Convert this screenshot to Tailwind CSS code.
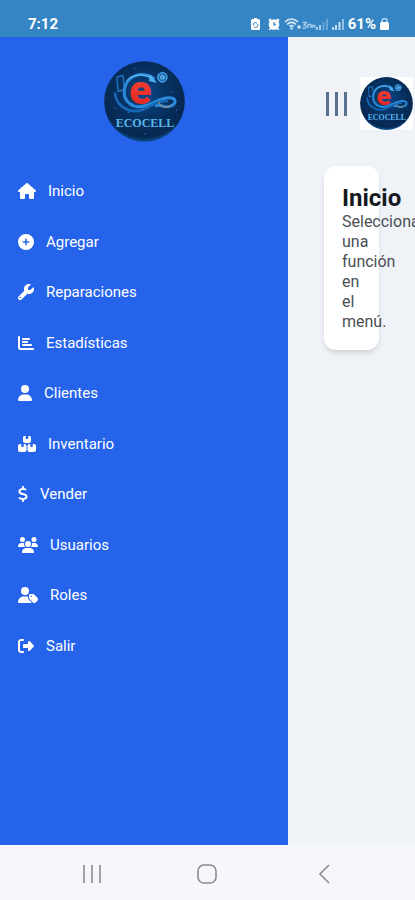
<!DOCTYPE html>
<html lang="es">
<head>
  <meta charset="UTF-8" />
  <meta name="viewport" content="width=device-width, initial-scale=1.0" />
  <title>Ecocell</title>
  <script src="https://cdn.jsdelivr.net/npm/@tailwindcss/browser@4"></script>
</head>
<body class="min-h-screen flex flex-col overflow-x-hidden bg-[#eff3f8] font-['Roboto',sans-serif]">
  <!-- Shared logo -->
  <svg class="absolute w-0 h-0" aria-hidden="true">
    <defs>
      <radialGradient id="logo-bg" cx="50%" cy="42%" r="58%">
        <stop offset="0" stop-color="#0a4a8c" />
        <stop offset="0.55" stop-color="#07305f" />
        <stop offset="0.9" stop-color="#062850" />
        <stop offset="1" stop-color="#0b4f8f" />
      </radialGradient>
      <linearGradient id="logo-e" x1="0" y1="0" x2="0" y2="1">
        <stop offset="0" stop-color="#ff4a38" />
        <stop offset="1" stop-color="#d92020" />
      </linearGradient>
    </defs>
    <symbol id="logo" viewBox="27 18 243 243">
      <circle cx="148.500" cy="139.500" r="121" fill="url(#logo-bg)" />
      <g fill="#2c7fc4">
        <circle cx="120" cy="40" r="2" />
        <circle cx="60" cy="160" r="2" />
        <circle cx="100" cy="172" r="2" />
        <circle cx="232" cy="110" r="2" />
        <circle cx="245" cy="165" r="2" />
        <circle cx="150" cy="236" r="2" />
      </g>
      <g fill="none" stroke-linecap="round" stroke-linejoin="round">
        <path d="M66 66l18-4 5 42-20 5z" stroke="#1f6db2" stroke-width="5" />
        <path d="M176 70C140 46 92 62 88 106c-4 34 26 54 56 48 30-6 48-26 78-26 24 0 24 20 2 26-18 6-28-8-40-2" stroke="#2a8bdc" stroke-width="9" />
        <path d="M60 116c4 40 50 66 92 44 22-12 40-22 64-22" stroke="#1769b5" stroke-width="8" />
        <path d="M96 76c16-18 50-24 76-4" stroke="#6cc4f5" stroke-width="3" />
        <path d="M192 142c6 18 24 20 36 8" stroke="#b98a52" stroke-width="3" />
        <circle cx="202" cy="67" r="14" fill="#1d6fb8" stroke="#4aa3e4" stroke-width="4" />
        <circle cx="202" cy="67" r="5" stroke="#8fd2fa" stroke-width="3" />
      </g>
      <path d="M164 56l22 28-24-6z" fill="#4db1f0" />
      <text x="136" y="148" text-anchor="middle" class="font-['Roboto'] font-black text-[122px]" fill="url(#logo-e)">e</text>
      <text x="150" y="216" text-anchor="middle" class="font-['Liberation_Serif'] font-bold text-[36px]" fill="#58b8ee">ECOCELL</text>
    </symbol>
  </svg>

  <!-- Status bar -->
  <div class="h-[37px] shrink-0 flex items-end justify-between bg-[#3584c4] pl-7 pr-[26px] pb-[3px] text-white">
    <span class="text-[15px] leading-5 font-bold">7:12</span>
    <div class="flex items-center gap-1">
      <svg class="w-[9px] h-3" viewBox="0 0 9 12" fill="white">
        <path d="M3 0h3v1h1.500A1.500 1.500 0 0 1 9 2.500v8A1.500 1.500 0 0 1 7.500 12h-6A1.500 1.500 0 0 1 0 10.500v-8A1.500 1.500 0 0 1 1.500 1H3z" />
        <path d="M2.500 7.500a2 2 0 0 1 3.500-2M6.500 6a2 2 0 0 1-3.500 2.500" fill="none" stroke="#3584c4" />
      </svg>
      <svg class="ml-1 w-3 h-3" viewBox="0 0 12 12">
        <circle cx="6" cy="6.500" r="5.300" fill="white" />
        <path d="M1 3L3 1M9 1l2 2M2.500 10.500L1.500 12M9.500 10.500l1 1.500" stroke="white" stroke-width="1.800" />
        <path d="M6 4v3l2-1" fill="none" stroke="#3584c4" stroke-width="1.200" />
      </svg>
      <svg class="w-8 h-3" viewBox="0 0 32 12" fill="none" stroke="#d3e8f8">
        <path d="M1 4c4-4 9-4 13 0M3 6.500c3-3 6-3 9 0M5.500 8.500c1.500-1.200 2.500-1.200 4 0" stroke-width="1.700" />
        <circle cx="7.500" cy="10.500" r="1.200" fill="#d3e8f8" stroke="none" />
        <path d="M13 9h4M15 7v4" stroke-width="1.300" />
        <path d="M18.500 4.500h4l-2.500 2.500q3 0 2 2.500-2 1.500-3.500 0M24 10V6.500h3V10M28.500 10V7.500h2.500V10" stroke="#a5cdec" stroke-width="1.300" />
      </svg>
      <svg class="-ml-1 w-3 h-3" viewBox="0 0 12 12">
        <path d="M0 9h2v3H0zM3 7h2v5H3z" fill="#a5cdec" />
        <path d="M6.500 4h2v8h-2zM10 1h2v11h-2z" fill="#69a6d8" />
      </svg>
      <svg class="w-3 h-3" viewBox="0 0 12 12">
        <path d="M0 9h2v3H0zM3 7h2v5H3zM6.500 4h2v8h-2z" fill="#c4dff4" />
        <path d="M10 1h2v11h-2z" fill="#8ebfe6" />
      </svg>
      <span class="text-[15px] leading-5 font-bold">61%</span>
      <svg class="w-[9px] h-3" viewBox="0 0 9 12">
        <path d="M2 5V3a2.500 2.500 0 0 1 5 0v2" fill="none" stroke="#b8d8f0" stroke-width="1.500" />
        <rect y="4" width="9" height="8" rx="1.500" fill="white" />
      </svg>
    </div>
  </div>

  <div class="flex-1 flex">
    <!-- Sidebar -->
    <aside class="w-72 shrink-0 bg-[#2563eb] text-white">
      <div class="flex justify-center pt-6">
        <svg class="w-[81px] h-[81px]" role="img" aria-label="Ecocell"><use href="#logo" /></svg>
      </div>
      <nav class="mt-6">
        <ul class="grid grid-rows-10 h-[505px] text-[15px] leading-5">
          <li class="flex">
            <a href="#" class="flex-1 flex items-center gap-3 px-[18px]">
              <svg class="w-[18px] h-4" viewBox="0 0 576 512" fill="currentColor"><path d="M575.8 255.500c0 18-15 32.100-32 32.100h-32l.7 160.200c0 2.700-.2 5.400-.5 8.100V472c0 22.100-17.900 40-40 40H392c-22.100 0-40-17.900-40-40v-88c0-17.700-14.300-32-32-32h-64c-17.700 0-32 14.300-32 32v88c0 22.100-17.900 40-40 40h-80c-22.100 0-40-17.900-40-40V287.600H32c-18 0-32-14-32-32.100 0-9 3-17 10-24L266.400 8c7-7 15-8 22-8s15 2 21 7l255.400 224.500c8 7 12 15 11 24z" /></svg>
              Inicio
            </a>
          </li>
          <li class="flex">
            <a href="#" class="flex-1 flex items-center gap-3 px-[18px]">
              <svg class="w-4 h-4" viewBox="0 0 512 512" fill="currentColor"><path d="M256 512A256 256 0 1 0 256 0a256 256 0 1 0 0 512zM232 344v-64h-64c-13.300 0-24-10.700-24-24s10.700-24 24-24h64v-64c0-13.300 10.700-24 24-24s24 10.700 24 24v64h64c13.300 0 24 10.700 24 24s-10.700 24-24 24h-64v64c0 13.300-10.700 24-24 24s-24-10.700-24-24z" /></svg>
              Agregar
            </a>
          </li>
          <li class="flex">
            <a href="#" class="flex-1 flex items-center gap-3 px-[18px]">
              <svg class="w-4 h-4" viewBox="0 0 512 512" fill="currentColor"><path d="M352 320c88.400 0 160-71.600 160-160 0-15.300-2.200-30.100-6.200-44.200-3.100-10.800-16.400-13.200-24.300-5.300l-76.800 76.800c-3 3-7.100 4.700-11.300 4.700H336c-8.800 0-16-7.200-16-16v-57.400c0-4.200 1.700-8.300 4.700-11.300l76.800-76.800c7.900-7.900 5.400-21.200-5.300-24.300C382.100 2.200 367.300 0 352 0c-88.400 0-160 71.600-160 160 0 19.100 3.400 37.500 9.500 54.500L19.900 396.100C7.200 408.800 0 426.100 0 444.100 0 481.600 30.400 512 67.900 512c18 0 35.300-7.200 48-19.900l181.600-181.600c17 6.200 35.400 9.500 54.500 9.500zM80 408a24 24 0 1 1 0 48 24 24 0 1 1 0-48z" /></svg>
              Reparaciones
            </a>
          </li>
          <li class="flex">
            <a href="#" class="flex-1 flex items-center gap-3 px-[18px]">
              <svg class="w-4 h-4" viewBox="0 0 512 512" fill="currentColor"><path d="M32 32c17.700 0 32 14.300 32 32v336c0 8.800 7.200 16 16 16h400c17.700 0 32 14.300 32 32s-14.300 32-32 32H80c-44.200 0-80-35.800-80-80V64c0-17.700 14.300-32 32-32zm96 96c0-17.700 14.300-32 32-32h192c17.700 0 32 14.300 32 32s-14.300 32-32 32H160c-17.700 0-32-14.300-32-32zm32 64h128c17.700 0 32 14.300 32 32s-14.300 32-32 32H160c-17.700 0-32-14.300-32-32s14.300-32 32-32zm0 96h256c17.700 0 32 14.300 32 32s-14.300 32-32 32H160c-17.700 0-32-14.300-32-32s14.300-32 32-32z" /></svg>
              Estadísticas
            </a>
          </li>
          <li class="flex">
            <a href="#" class="flex-1 flex items-center gap-3 px-[18px]">
              <svg class="w-[14px] h-4" viewBox="0 0 448 512" fill="currentColor"><path d="M224 256A128 128 0 1 0 224 0a128 128 0 1 0 0 256zm-45.700 48C79.800 304 0 383.800 0 482.300 0 498.700 13.300 512 29.700 512h388.600c16.400 0 29.700-13.300 29.700-29.700 0-98.500-79.800-178.300-178.300-178.300h-91.400z" /></svg>
              Clientes
            </a>
          </li>
          <li class="flex">
            <a href="#" class="flex-1 flex items-center gap-3 px-[18px]">
              <svg class="w-[18px] h-4" viewBox="0 0 576 512" fill="currentColor"><path d="M248 0h-40c-26.500 0-48 21.500-48 48v112c0 35.300 28.700 64 64 64h128c35.300 0 64-28.700 64-64V48c0-26.500-21.500-48-48-48h-40v80c0 8.800-7.200 16-16 16h-48c-8.800 0-16-7.200-16-16V0zM64 256c-35.300 0-64 28.700-64 64v128c0 35.300 28.700 64 64 64h144c35.300 0 64-28.700 64-64V320c0-35.300-28.700-64-64-64h-24v80c0 8.800-7.200 16-16 16h-48c-8.800 0-16-7.200-16-16v-80H64zM368 512h144c35.300 0 64-28.700 64-64V320c0-35.300-28.700-64-64-64h-40v80c0 8.800-7.200 16-16 16h-48c-8.800 0-16-7.200-16-16v-80h-24c-35.300 0-64 28.700-64 64v128c0 35.300 28.700 64 64 64z" /></svg>
              Inventario
            </a>
          </li>
          <li class="flex">
            <a href="#" class="flex-1 flex items-center gap-3 px-[18px]">
              <svg class="w-[10px] h-4" viewBox="0 0 320 512" fill="currentColor"><path d="M160 0c17.700 0 32 14.300 32 32v35.700c1.600.2 3.100.4 4.700.7l49.100 9c17.400 3.200 28.900 19.900 25.700 37.200s-19.900 28.900-37.200 25.700l-47.500-8.700c-31.300-4.600-58.900-1.500-78.300 6.200s-27.200 18.300-29 28.100c-2 10.700-.5 16.700 1.200 20.400 1.800 3.900 5.500 8.300 12.800 13.200 16.300 10.700 41.300 17.700 73.700 26.300l2.900.8c28.600 7.600 63.600 16.800 89.600 33.800 14.200 9.300 27.600 21.900 35.900 39.500 8.500 17.900 10.300 37.900 6.400 59.200-6.900 38-33.100 63.400-65.600 76.700-13.700 5.600-28.600 9.200-44.400 11V480c0 17.700-14.300 32-32 32s-32-14.300-32-32v-34.900l-1.500-.2c-24.400-3.800-64.500-14.300-91.500-26.300-16.100-7.200-23.400-26.100-16.200-42.200s26.100-23.400 42.200-16.200c20.900 9.300 55.300 18.500 75.200 21.600 31.900 4.700 58.200 2 76-5.300 16.900-6.900 24.600-16.900 26.800-28.900 1.900-10.600.4-16.700-1.300-20.400-1.900-4-5.600-8.400-13-13.300-16.400-10.700-41.500-17.700-74-26.300l-2.800-.7C119.400 279.300 84.400 270 58.400 253c-14.200-9.300-27.500-22-35.800-39.600-8.400-17.900-10.100-37.900-6.100-59.200C23.700 116 52.300 91.200 84.800 78.300c13.300-5.300 27.900-8.900 43.200-11V32c0-17.700 14.300-32 32-32z" /></svg>
              Vender
            </a>
          </li>
          <li class="flex">
            <a href="#" class="flex-1 flex items-center gap-3 px-[18px]">
              <svg class="w-5 h-4" viewBox="0 0 640 512" fill="currentColor"><path d="M144 0a80 80 0 1 1 0 160A80 80 0 1 1 144 0zM512 0a80 80 0 1 1 0 160A80 80 0 1 1 512 0zM0 298.700C0 239.800 47.800 192 106.700 192h42.700c15.900 0 31 3.500 44.600 9.700-1.300 7.200-1.900 14.700-1.900 22.300 0 38.200 16.800 72.500 43.300 96H21.300C9.600 320 0 310.400 0 298.700zM405.300 320c26-23.500 42.700-57.800 42.700-96 0-7.600-.7-15-1.900-22.300 13.600-6.300 28.700-9.700 44.600-9.700h42.700C592.200 192 640 239.800 640 298.700c0 11.800-9.600 21.300-21.300 21.300H405.300zM224 224a96 96 0 1 1 192 0 96 96 0 1 1-192 0zM128 485.300C128 411.700 187.700 352 261.300 352h117.400C452.300 352 512 411.700 512 485.300c0 14.700-11.900 26.700-26.700 26.700H154.700c-14.700 0-26.700-11.900-26.700-26.700z" /></svg>
              Usuarios
            </a>
          </li>
          <li class="flex">
            <a href="#" class="flex-1 flex items-center gap-3 px-[18px]">
              <svg class="w-5 h-4" viewBox="0 0 640 512" fill="currentColor"><path d="M224 256A128 128 0 1 0 224 0a128 128 0 1 0 0 256zm-45.700 48C79.800 304 0 383.800 0 482.300 0 498.700 13.300 512 29.700 512h388.600c10 0 19-5 24-12l-94-94c-18-18-28-42-28-67v-27c-16-5-33-8-50.600-8h-92zM352 272v67c0 17 6.700 33.300 18.700 45.300l104 109c25 25 65.500 25 90.500 0l56-56c25-25 25-65.500 0-90.500l-104-104c-12-12-28.300-18.700-45.300-18.700H400c-26.500 0-48 21.500-48 48zm72 0a24 24 0 1 1 0 48 24 24 0 1 1 0-48z" /></svg>
              Roles
            </a>
          </li>
          <li class="flex">
            <a href="#" class="flex-1 flex items-center gap-3 px-[18px]">
              <svg class="w-4 h-4" viewBox="0 0 512 512" fill="currentColor"><path d="M377.900 105.900l122.800 122.800c7.200 7.200 11.300 17.100 11.300 27.300s-4.100 20.100-11.300 27.300L377.900 406.100c-6.400 6.400-15 9.900-24 9.900-18.700 0-33.900-15.200-33.900-33.900V320H192c-17.700 0-32-14.300-32-32v-64c0-17.700 14.300-32 32-32h128v-62.100c0-18.700 15.200-33.900 33.900-33.900 9 0 17.600 3.600 24 9.900zM160 96H96c-17.700 0-32 14.300-32 32v256c0 17.700 14.300 32 32 32h64c17.700 0 32 14.300 32 32s-14.300 32-32 32H96c-53 0-96-43-96-96V128c0-53 43-96 96-96h64c17.700 0 32 14.300 32 32s-14.300 32-32 32z" /></svg>
              Salir
            </a>
          </li>
        </ul>
      </nav>
    </aside>

    <!-- Content -->
    <main class="flex-1 min-w-0 px-9 pt-10">
      <header class="flex items-center gap-3">
        <button type="button" aria-label="Menú" class="shrink-0 flex justify-center gap-[6px] w-6">
          <span class="w-[3px] h-6 shrink-0 bg-[#5b708c]"></span>
          <span class="w-[3px] h-6 shrink-0 bg-[#5b708c]"></span>
          <span class="w-[3px] h-6 shrink-0 bg-[#5b708c]"></span>
        </button>
        <div class="shrink-0 bg-white">
          <svg class="w-[53px] h-[53px]" role="img" aria-label="Ecocell"><use href="#logo" /></svg>
        </div>
      </header>

      <section class="mt-9 p-[18px] bg-white rounded-xl shadow-md">
        <h1 class="text-2xl leading-7 font-bold text-[#17191d]">Inicio</h1>
        <p class="text-base leading-5 text-[#4b4f55]">Selecciona una función en el menú.</p>
      </section>
    </main>
  </div>

  <!-- System navigation -->
  <nav class="h-[55px] shrink-0 grid grid-cols-3 items-center px-[34px] pt-[2px] bg-[#f6f7fa]">
    <button type="button" aria-label="Recientes" class="flex justify-center">
      <svg class="w-5 h-5" viewBox="0 0 20 20" fill="none" stroke="#8b8c8f" stroke-width="1.600"><path d="M2 1v18M10 1v18M18 1v18" /></svg>
    </button>
    <button type="button" aria-label="Inicio" class="flex justify-center">
      <svg class="w-5 h-5" viewBox="0 0 20 20" fill="none" stroke="#8b8c8f" stroke-width="1.600"><rect x="1" y="1" width="18" height="18" rx="6" /></svg>
    </button>
    <button type="button" aria-label="Atrás" class="flex justify-center">
      <svg class="w-5 h-5" viewBox="0 0 20 20" fill="none" stroke="#8b8c8f" stroke-width="1.600"><path d="M16 1L7 10l9 9" /></svg>
    </button>
  </nav>
</body>
</html>
